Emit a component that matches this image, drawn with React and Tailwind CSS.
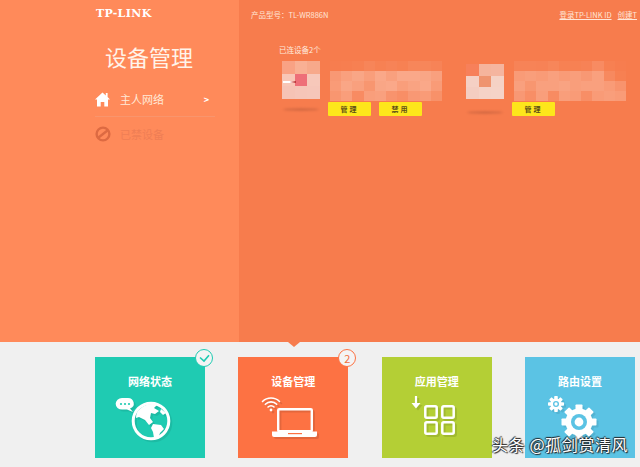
const cjk = { fontFamily: '"Noto Sans CJK SC", "Liberation Sans", sans-serif' }

function Mosaic({ rows, cellW, cellH }) {
  return (
    <div className="blur-[0.5px]">
      {rows.map((row, i) => (
        <div key={i} className="flex">
          {row.map((c, j) => (
            <div key={j} style={{ width: cellW, height: cellH, background: typeof c === 'number' ? `rgba(255,255,255,${c})` : c }} />
          ))}
        </div>
      ))}
    </div>
  )
}

const icon1 = [
  ['#f9a284', '#f9b094', '#f7a98b'],
  ['#f8c6b6', '#ee6f78', '#f7c8ba'],
  ['#f6c3b5', '#f6c5b8', '#f6c6b9'],
]
const icon2 = [
  ['#f7805a', '#f5b49c', '#f5b59f'],
  ['#f5d0c4', '#ef946f', '#f5d2c5'],
  ['#f4cdc1', '#f5d2c6', '#f5d3c7'],
]
const name1 = [
  [0.01, 0.02, 0.03, 0.07, 0.04, 0.06, 0.04, 0.08, 0.08, 0.06],
  [0.22, 0.28, 0.32, 0.26, 0.34, 0.28, 0.34, 0.34, 0.32, 0.28],
  [0.24, 0.32, 0.28, 0.2, 0.32, 0.34, 0.26, 0.3, 0.34, 0.24],
  [0.2, 0.26, 0.12, 0.26, 0.28, 0.18, 0.14, 0.22, 0.24, 0.16],
]
const name2 = [
  [0.06, 0.06, 0.05, 0.08, 0.04, 0.04, 0.05, 0.12, 0.03, 0.01],
  [0.24, 0.26, 0.24, 0.28, 0.24, 0.26, 0.22, 0.28, 0.1, 0.03],
  [0.28, 0.2, 0.28, 0.28, 0.3, 0.26, 0.28, 0.28, 0.24, 0.18],
  [0.22, 0.14, 0.26, 0.12, 0.26, 0.24, 0.14, 0.24, 0.26, 0.24],
]

function ActionButton({ children }) {
  return (
    <span className="flex h-[14px] w-[43px] items-center justify-center rounded-[1px] bg-[#fde61b] text-[7px] font-bold tracking-[2px] text-[#5f5018]">
      {children}
    </span>
  )
}

function Device({ icon, name, cornerDash, actions, iconTop }) {
  return (
    <div className="flex">
      <div className="w-[38px]">
        <div className="relative h-[38px]" style={{ marginTop: iconTop }}>
          <Mosaic rows={icon} cellW={12.5} cellH={cornerDash ? 12.5 : 11.5} />
          {cornerDash && <span className="absolute left-[1px] top-[20px] h-[2px] w-[13px] bg-gradient-to-r from-white via-white to-[#b3262f]" />}
        </div>
        <div className="mx-auto mt-[9px] h-[3px] w-[36px] rounded-[50%] bg-[#b85a3a] opacity-50 blur-[1px]" />
      </div>
      <div className="ml-[10px] w-[112px]">
        <Mosaic rows={name} cellW={11.2} cellH={10} />
        <div className="ml-[-2px] mt-[1px] flex gap-[8px]">
          {actions.map((a) => (
            <ActionButton key={a}>{a}</ActionButton>
          ))}
        </div>
      </div>
    </div>
  )
}

function HomeIcon() {
  return (
    <svg width="15" height="15" viewBox="0 0 15 15" fill="#fff">
      <path d="M10.8 1 H12.6 V5 L15 7.6 L13 7.6 L13 14.5 L9.3 14.5 L9.3 10 L5.7 10 L5.7 14.5 L2 14.5 L2 7.6 L0 7.6 L7.5 0.5 L10.8 3.6 Z" />
    </svg>
  )
}

function BanIcon() {
  return (
    <svg width="16" height="16" viewBox="0 0 16 16" fill="none" stroke="#dd6a42" strokeWidth="2.4">
      <circle cx="8" cy="8" r="6.4" />
      <path d="M3.5 11.5 L12.5 4.5" />
    </svg>
  )
}

function Globe() {
  return (
    <svg width="110" height="66" viewBox="0 0 110 66" className="drop-shadow-[2px_2px_0_rgba(0,0,0,0.08)]">
      <path d="M27 6 h6 a6 5.5 0 0 1 2 10.6 l3 3.4 l-6 -2.4 h-5 a6 5.5 0 0 1 0 -11.6 Z" fill="#fff" />
      <circle cx="26" cy="12" r="1.1" fill="#1fcbb2" />
      <circle cx="30" cy="12" r="1.1" fill="#1fcbb2" />
      <circle cx="34" cy="12" r="1.1" fill="#1fcbb2" />
      <circle cx="56" cy="29" r="17.8" fill="none" stroke="#fff" strokeWidth="3" />
      <path d="M45 17 C50 12 58 11 62 13 L59 16 L64 19 L60 22 L56 21 L55 26 L58 30 L54 33 L50 28 L44 25 L41 26 C41 22 42 19 45 17 Z" fill="#fff" />
      <path d="M58 32 L66 33 L69 37 L65 41 L63 47 L59 46 L58 40 L56 36 Z" fill="#fff" />
      <path d="M66 17 L71 21 L68 23 L65 20 Z" fill="#fff" />
    </svg>
  )
}

function Laptop() {
  return (
    <svg width="110" height="66" viewBox="0 0 110 66" className="drop-shadow-[2px_2px_0_rgba(0,0,0,0.1)]">
      <g fill="none" stroke="#fff" strokeWidth="1.6" strokeLinecap="round">
        <path d="M24.5 9.5 A12 12 0 0 1 41.5 9.5" />
        <path d="M27.3 12.3 A8 8 0 0 1 38.7 12.3" />
        <path d="M30 15 A4.2 4.2 0 0 1 36 15" />
      </g>
      <circle cx="33" cy="18" r="1.4" fill="#fff" />
      <rect x="40.2" y="17.2" width="33.6" height="22" rx="1" fill="none" stroke="#fff" strokeWidth="2.4" />
      <path d="M34 39.5 H79 V43 Q79 45 77 45 H36 Q34 45 34 43 Z" fill="#fff" />
      <rect x="50" y="41" width="14" height="1.2" fill="#fd7243" />
    </svg>
  )
}

function Apps() {
  return (
    <svg width="110" height="66" viewBox="0 0 110 66" className="drop-shadow-[2px_2px_0_rgba(0,0,0,0.1)]">
      <path d="M34 4 V14" stroke="#fff" strokeWidth="2.2" />
      <path d="M29.5 11 H38.5 L34 16.5 Z" fill="#fff" />
      <g fill="none" stroke="#fff" strokeWidth="2.5">
        <rect x="43.3" y="14.3" width="11.4" height="11.4" rx="1.5" />
        <rect x="60.3" y="14.3" width="11.4" height="11.4" rx="1.5" />
        <rect x="43.3" y="30.3" width="11.4" height="11.4" rx="1.5" />
        <rect x="60.3" y="30.3" width="11.4" height="11.4" rx="1.5" />
      </g>
    </svg>
  )
}

function Gear({ cx, cy, outer, body, hole, toothW }) {
  const teeth = [0, 45, 90, 135, 180, 225, 270, 315]
  return (
    <g>
      {teeth.map((t) => (
        <rect key={t} x={cx - toothW / 2} y={cy - outer} width={toothW} height={outer - body + 2} rx="0.8" fill="#fff" transform={`rotate(${t} ${cx} ${cy})`} />
      ))}
      <circle cx={cx} cy={cy} r={body} fill="#fff" />
      <circle cx={cx} cy={cy} r={hole} fill="#5bc3e4" />
      <circle cx={cx} cy={cy} r={hole * 0.55} fill="#fff" />
    </g>
  )
}

function Gears() {
  return (
    <svg width="110" height="66" viewBox="0 0 110 66" className="drop-shadow-[2px_2px_0_rgba(0,0,0,0.08)]">
      <Gear cx={31} cy={12} outer={8} body={5.6} hole={3} toothW={3.6} />
      <Gear cx={54} cy={30} outer={17.5} body={13.5} hole={8} toothW={7} />
    </svg>
  )
}

function Tile({ title, color, children, badge }) {
  return (
    <div className={`relative h-[101px] w-[110px] shrink-0 ${color}`}>
      <div className="pt-[16px] text-center text-[11px] font-bold leading-[16px] text-white">{title}</div>
      <div className="mt-[3px]">{children}</div>
      {badge}
    </div>
  )
}

export default function App() {
  return (
    <div className="relative h-[467px] w-[640px] overflow-hidden bg-[#f0f0f0]" style={cjk}>
      <div className="flex h-[342px]">
        <aside className="w-[239px] shrink-0 bg-[#ff8a5a] pl-[96px] pr-[24px] pt-[7px] text-white">
          <div className="whitespace-nowrap text-[11px] font-bold leading-[13px] tracking-[0.4px]" style={{ fontFamily: '"DejaVu Serif", serif' }}>TP-LINK</div>
          <h1 className="ml-[9px] mt-[21px] text-[22px] font-normal leading-[30px] text-[#fff4ea]">设备管理</h1>
          <div className="ml-[-1px] mt-[16px] flex h-[30px] items-center border-b border-[#f9956d] pb-[4px]">
            <HomeIcon />
            <span className="ml-[10px] text-[11px] text-[#ffe9d8]">主人网络</span>
            <span className="ml-auto mr-[6px] text-[9px] font-bold">&gt;</span>
          </div>
          <div className="ml-[-1px] mt-[9px] flex items-center">
            <BanIcon />
            <span className="ml-[9px] text-[11px] text-[#ef7e55]">已禁设备</span>
          </div>
        </aside>
        <main className="min-w-0 flex-1 overflow-hidden bg-[#f77c4d] text-white">
          <div className="flex h-[30px] items-center whitespace-nowrap pl-[12px] text-[7.5px] text-[#ffe6d8]">
            <span>产品型号：TL-WR886N</span>
            <span className="ml-[231px] underline">登录TP-LINK ID</span>
            <span className="ml-[6px] underline">创建T</span>
          </div>
          <div className="ml-[40px] mt-[15px] text-[7.5px] leading-[10px] text-[#ffeadf]">已连设备2个</div>
          <div className="ml-[43px] mt-[6px] flex gap-[24px]">
            <Device icon={icon1} name={name1} cornerDash actions={['管理', '禁用']} iconTop={0} />
            <Device icon={icon2} name={name2} actions={['管理']} iconTop={3} />
          </div>
        </main>
      </div>
      <div className="absolute left-[288px] top-[342px] h-0 w-0 border-x-[6px] border-t-[5px] border-x-transparent border-t-[#f77c4d]" />
      <div className="flex gap-[33.33px] pl-[95px] pt-[15px]">
        <Tile
          title="网络状态"
          color="bg-[#1fcbb2]"
          badge={
            <span className="absolute right-[-8px] top-[-8px] flex h-[18px] w-[18px] items-center justify-center rounded-full border-[1.5px] border-[#1fcbb2] bg-[#f4f4f4]">
              <svg width="11" height="9" viewBox="0 0 11 9" fill="none" stroke="#1fcbb2" strokeWidth="1.6"><path d="M1 3.5 L5 7 L10 1.2" /></svg>
            </span>
          }
        >
          <Globe />
        </Tile>
        <Tile
          title="设备管理"
          color="bg-[#fd7243]"
          badge={
            <span className="absolute right-[-8px] top-[-8px] flex h-[18px] w-[18px] items-center justify-center rounded-full border-[1.5px] border-[#fd7243] bg-[#f4f4f4] text-[11px] text-[#f0703f]">2</span>
          }
        >
          <Laptop />
        </Tile>
        <Tile title="应用管理" color="bg-[#b4cf35]">
          <Apps />
        </Tile>
        <Tile title="路由设置" color="bg-[#5bc3e4]">
          <Gears />
        </Tile>
      </div>
      <div className="absolute left-[492px] top-[432px] whitespace-nowrap text-[16px] leading-[24px] tracking-[0.6px] text-white [text-shadow:1px_1px_1px_#222,-1px_0_1px_#222,0_-1px_1px_#222]">
        头条 @孤剑赏清风
      </div>
    </div>
  )
}
